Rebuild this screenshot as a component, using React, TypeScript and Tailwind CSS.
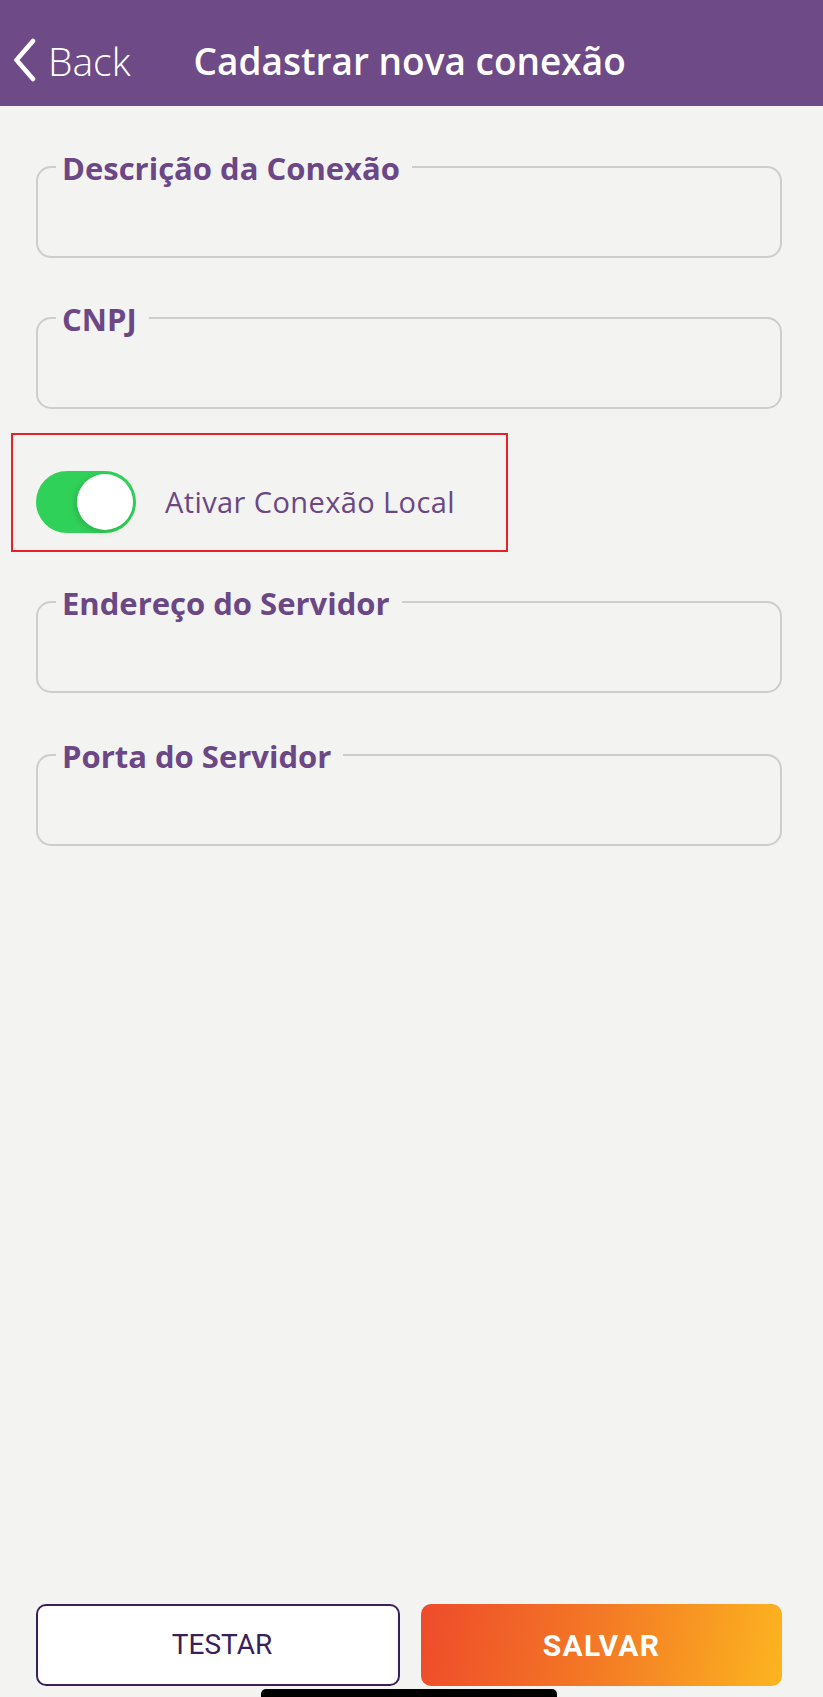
import React from "react";

const F = { fontFamily: '"Open Sans", "Noto Sans", sans-serif' };

function Field({ label }: { label: string }) {
  return (
    <div className="relative h-[92px] w-full rounded-[15px] border-2 border-[#cdcdcd]">
      <span
        className="absolute left-[18px] top-[-20px] bg-[#f3f3f2] pl-[6px] pr-[12px] text-[31px] font-bold leading-[40px] tracking-[0px] text-[#6b4785]"
        style={F}
      >
        {label}
      </span>
    </div>
  );
}

export default function App() {
  return (
    <div className="flex h-[1697px] w-full flex-col bg-[#f3f3f2]" style={F}>
      <header className="flex h-[106px] items-center bg-[#6e4a86] pt-[14px]">
        <div className="flex items-center pl-[12px]">
          <svg width="25" height="44" viewBox="0 0 25 44" fill="none">
            <polyline
              points="21,3 4.5,22 21,41"
              stroke="white"
              strokeWidth="4.6"
              strokeLinecap="round"
              strokeLinejoin="round"
            />
          </svg>
          <span className="ml-[11px] text-[39px] font-light leading-none text-white">Back</span>
        </div>
        <h1 className="ml-[63px] text-[37px] font-semibold leading-none text-white">
          Cadastrar nova conexão
        </h1>
      </header>

      <main className="flex flex-1 flex-col pl-[36px] pr-[41px] pt-[60px]">
        <Field label="Descrição da Conexão" />
        <div className="mt-[59px]">
          <Field label="CNPJ" />
        </div>
        <div className="ml-[-25px] mt-[24px] flex h-[119px] w-[497px] items-start border-2 border-[#e8202a] pl-[23px] pt-[36px]">
          <div className="flex h-[62px] w-[100px] items-center justify-end rounded-full bg-[#30d158] pr-[3px]">
            <div className="h-[56px] w-[56px] rounded-full bg-white shadow-[-2px_2px_6px_rgba(0,0,0,0.15)]" />
          </div>
          <span className="ml-[29px] mt-[12px] text-[29px] leading-[38px] tracking-[0.4px] text-[#6b4785]">
            Ativar Conexão Local
          </span>
        </div>
        <div className="mt-[49px]">
          <Field label="Endereço do Servidor" />
        </div>
        <div className="mt-[61px]">
          <Field label="Porta do Servidor" />
        </div>
      </main>

      <footer className="flex gap-[21px] pl-[36px] pr-[41px]">
        <button
          className="flex h-[82px] w-[364px] items-center justify-center rounded-[10px] border-2 border-[#3b1f5a] bg-white pl-[8px] text-[28px] text-[#3b1f5a]"
          style={{ fontFamily: '"Roboto", sans-serif' }}
        >
          TESTAR
        </button>
        <button
          className="flex h-[82px] flex-1 items-center justify-center rounded-[10px] bg-[linear-gradient(100deg,#ee4b2b_0%,#f47a25_50%,#fcb520_100%)] text-[30px] font-bold tracking-[1.3px] text-white"
          style={{ fontFamily: '"Roboto", sans-serif' }}
        >
          SALVAR
        </button>
      </footer>
      <div className="ml-[261px] mt-[3px] h-[8px] w-[296px] rounded-t-[5px] bg-black" />
    </div>
  );
}
